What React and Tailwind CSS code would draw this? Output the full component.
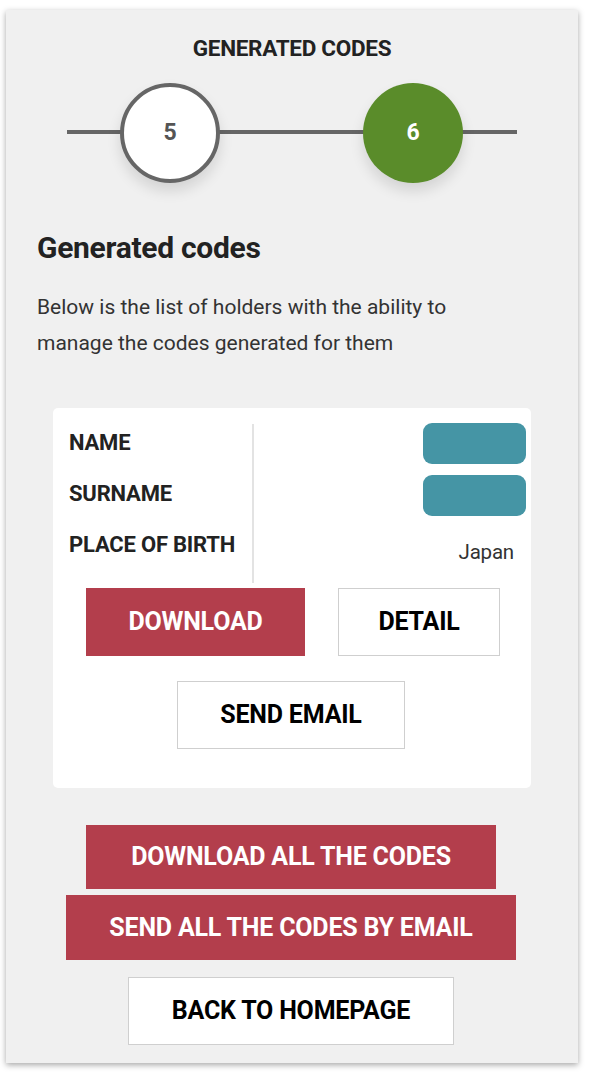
import React from "react";

export default function App() {
  const font = { fontFamily: "Roboto, 'Liberation Sans', sans-serif" };
  const btn = "text-[25px] font-bold tracking-[-0.2px]";
  return (
    <div className="w-[590px] h-[1074px] bg-white pt-[10px] pl-[6px]" style={font}>
      <div className="w-[572px] h-[1053px] bg-[#f0f0f0] shadow-[0_2px_6px_rgba(0,0,0,0.35)] flex flex-col">
        <div className="pt-[25px] text-center text-[22.5px] font-bold text-[#222] leading-[26px] tracking-[-0.3px]">
          GENERATED CODES
        </div>
        {/* stepper */}
        <div className="relative mt-[22px] h-[100px] mx-[61px]">
          <div className="absolute left-0 right-0 top-[47px] h-[4px] bg-[#666]" />
          <div className="absolute left-[53px] top-0 w-[100px] h-[100px] rounded-full bg-white border-[4px] border-[#666] flex items-center justify-center text-[23px] font-bold text-[#555] shadow-[0_8px_14px_rgba(0,0,0,0.12)]">
            5
          </div>
          <div className="absolute left-[296px] top-0 w-[100px] h-[100px] rounded-full bg-[#5a8c2a] flex items-center justify-center text-[23px] font-bold text-white shadow-[0_8px_14px_rgba(0,0,0,0.12)]">
            6
          </div>
        </div>
        <div className="mt-[48px] px-[31px]">
          <h2 className="text-[30px] font-bold text-[#222] leading-[34px] tracking-[-0.3px]">Generated codes</h2>
          <p className="mt-[24px] max-w-[470px] text-[21px] text-[#333] leading-[36px]">
            Below is the list of holders with the ability to manage the codes generated for them
          </p>
        </div>
        {/* holder card */}
        <div className="mt-[47px] mx-[47px] bg-white rounded-[5px] h-[380px] flex flex-col">
          <div className="flex pt-[16px] h-[175px]">
            <div className="w-[201px] border-r-2 border-[#e3e3e3] pl-[16px] text-[22px] font-bold text-[#222] tracking-[-0.2px]">
              <div className="-mt-[7px] flex flex-col">
                <div className="h-[51px] flex items-center">NAME</div>
                <div className="h-[51px] flex items-center">SURNAME</div>
                <div className="h-[51px] flex items-center">PLACE OF BIRTH</div>
              </div>
            </div>
            <div className="flex-1 flex flex-col items-end pr-[5px]">
              <div className="-mt-[1px] w-[103px] h-[41px] rounded-[9px] bg-[#4595a5]" />
              <div className="mt-[11px] w-[103px] h-[41px] rounded-[9px] bg-[#4595a5]" />
              <div className="mt-[21px] mr-[12px] text-[20.5px] text-[#333] tracking-[-0.2px]">Japan</div>
            </div>
          </div>
          <div className="mt-[5px] flex justify-center gap-[33px] pl-[2px]">
            <button className={`w-[219px] h-[68px] bg-[#b33e4c] text-white ${btn}`}>DOWNLOAD</button>
            <button className={`w-[162px] h-[68px] bg-white border border-[#cfcfcf] text-black ${btn}`}>DETAIL</button>
          </div>
          <div className="mt-[25px] flex justify-center pr-[2px]">
            <button className={`w-[228px] h-[68px] bg-white border border-[#cfcfcf] text-black ${btn}`}>SEND EMAIL</button>
          </div>
        </div>
        {/* bottom actions */}
        <div className="mt-[37px] flex flex-col items-center">
          <button className={`w-[410px] h-[64px] bg-[#b33e4c] text-white mr-[2px] ${btn}`}>DOWNLOAD ALL THE CODES</button>
          <button className={`mt-[6px] w-[450px] h-[65px] bg-[#b33e4c] text-white mr-[2px] ${btn}`}>SEND ALL THE CODES BY EMAIL</button>
          <button className={`mt-[17px] w-[326px] h-[68px] bg-white border border-[#cfcfcf] text-black mr-[2px] ${btn}`}>BACK TO HOMEPAGE</button>
        </div>
      </div>
    </div>
  );
}
